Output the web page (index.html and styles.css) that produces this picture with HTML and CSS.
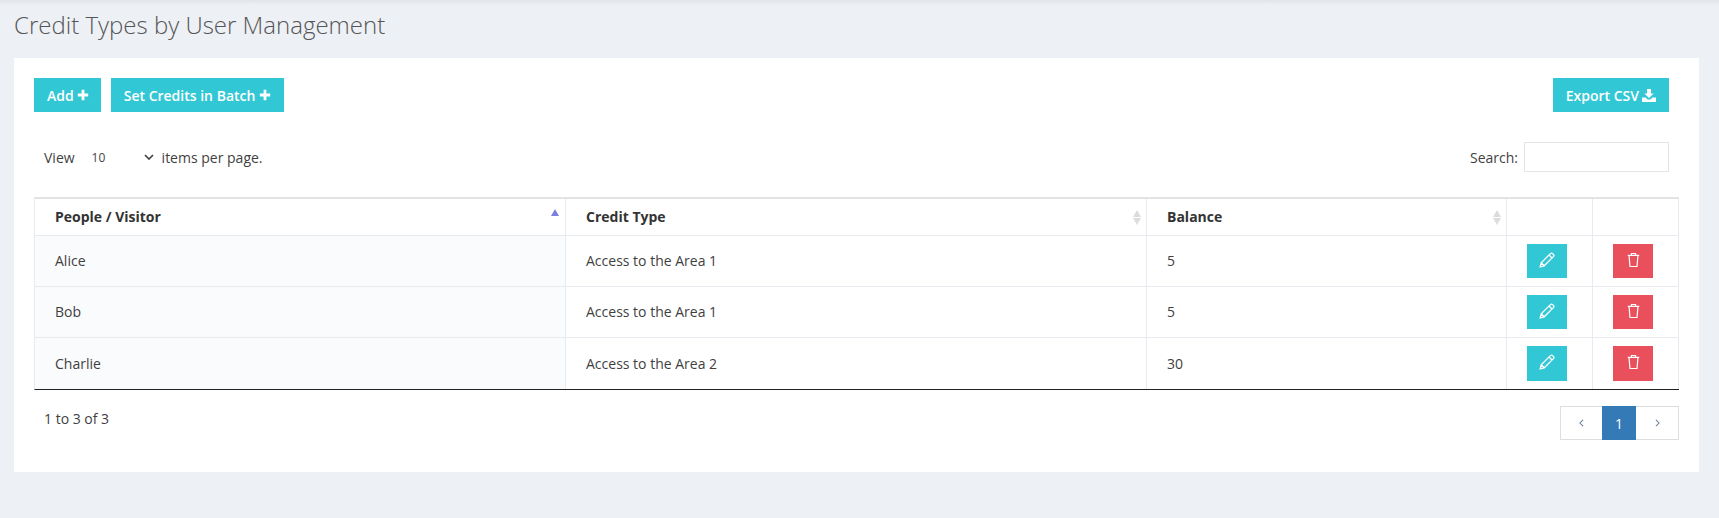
FILE: index.html
```html
<!DOCTYPE html>
<html lang="en">
<head>
<meta charset="utf-8">
<title>Credit Types by User Management</title>
<link rel="stylesheet" href="styles.css">
</head>
<body>
<div class="topshade"></div>
<h1 class="page-title">Credit Types by User Management</h1>
<main class="panel">
  <div class="toolbar">
    <div class="toolbar-left">
      <a class="btn btn-info">Add <svg class="ic" viewBox="0 0 12 12"><path d="M4.6 0.8h2.8v3.8h3.8v2.8H7.4v3.8H4.6V7.4H0.8V4.6h3.8z"/></svg></a>
      <a class="btn btn-info btn-wide">Set Credits in Batch <svg class="ic" viewBox="0 0 12 12"><path d="M4.6 0.8h2.8v3.8h3.8v2.8H7.4v3.8H4.6V7.4H0.8V4.6h3.8z"/></svg></a>
    </div>
    <a class="btn btn-info">Export CSV <svg class="ic ic-dl" viewBox="0 0 14 13"><path d="M5 0h4v4.5h2.6L7 9 2.4 4.5H5zM0 8.4h3.6L5.6 10.4h2.8l2-2H14V13H0z"/></svg></a>
  </div>
  <div class="controls">
    <label class="length">View
      <span class="select-wrap">
        <select class="select"><option>10</option><option>25</option><option>50</option></select>
        <svg class="chev" viewBox="0 0 10 6"><path d="M1 1l4 4 4-4" fill="none" stroke="#444" stroke-width="1.7"/></svg>
      </span>
      items per page.</label>
    <label class="search">Search: <input class="search-input" type="text"></label>
  </div>
  <table class="grid">
    <colgroup>
      <col class="c1"><col class="c2"><col class="c3"><col class="c4"><col class="c5">
    </colgroup>
    <thead>
      <tr>
        <th class="sortable"><span class="sort up-only"></span>People / Visitor</th>
        <th class="sortable"><span class="sort"></span>Credit Type</th>
        <th class="sortable"><span class="sort"></span>Balance</th>
        <th></th>
        <th></th>
      </tr>
    </thead>
    <tbody>
      <tr>
        <td class="first">Alice</td><td>Access to the Area 1</td><td>5</td>
        <td class="act"><a class="btn-sq btn-info"><svg class="pen" viewBox="0 0 16 16"><path d="M1.2 14.8l1-4L11.4 1.6a1.6 1.6 0 0 1 2.2 0l.8.8a1.6 1.6 0 0 1 0 2.2L5.2 13.8zM2.2 10.8l3 3M10 3l3 3" fill="none" stroke="#fff" stroke-width="1.3"/></svg></a></td>
        <td class="act"><a class="btn-sq btn-danger"><svg class="bin" viewBox="0 0 14 16"><path d="M0.8 3h12.4M2.2 3l1 12h7.6l1-12M4.8 3V1h4.4v2" fill="none" stroke="#fff" stroke-width="1.3"/></svg></a></td>
      </tr>
      <tr>
        <td class="first">Bob</td><td>Access to the Area 1</td><td>5</td>
        <td class="act"><a class="btn-sq btn-info"><svg class="pen" viewBox="0 0 16 16"><path d="M1.2 14.8l1-4L11.4 1.6a1.6 1.6 0 0 1 2.2 0l.8.8a1.6 1.6 0 0 1 0 2.2L5.2 13.8zM2.2 10.8l3 3M10 3l3 3" fill="none" stroke="#fff" stroke-width="1.3"/></svg></a></td>
        <td class="act"><a class="btn-sq btn-danger"><svg class="bin" viewBox="0 0 14 16"><path d="M0.8 3h12.4M2.2 3l1 12h7.6l1-12M4.8 3V1h4.4v2" fill="none" stroke="#fff" stroke-width="1.3"/></svg></a></td>
      </tr>
      <tr class="tall">
        <td class="first">Charlie</td><td>Access to the Area 2</td><td>30</td>
        <td class="act"><a class="btn-sq btn-info"><svg class="pen" viewBox="0 0 16 16"><path d="M1.2 14.8l1-4L11.4 1.6a1.6 1.6 0 0 1 2.2 0l.8.8a1.6 1.6 0 0 1 0 2.2L5.2 13.8zM2.2 10.8l3 3M10 3l3 3" fill="none" stroke="#fff" stroke-width="1.3"/></svg></a></td>
        <td class="act"><a class="btn-sq btn-danger"><svg class="bin" viewBox="0 0 14 16"><path d="M0.8 3h12.4M2.2 3l1 12h7.6l1-12M4.8 3V1h4.4v2" fill="none" stroke="#fff" stroke-width="1.3"/></svg></a></td>
      </tr>
    </tbody>
  </table>
  <div class="footer">
    <div class="info">1 to 3 of 3</div>
    <nav class="pager">
      <a class="page nav-page nav-prev"><svg class="arrow" viewBox="0 0 6 10"><path d="M5 1L1 5l4 4" fill="none" stroke="#6b7f95" stroke-width="1.3"/></svg></a>
      <a class="page current">1</a>
      <a class="page nav-page"><svg class="arrow" viewBox="0 0 6 10"><path d="M1 1l4 4-4 4" fill="none" stroke="#6b7f95" stroke-width="1.3"/></svg></a>
    </nav>
  </div>
</main>
</body>
</html>
```
FILE: styles.css
```css
* { box-sizing: border-box; }
html, body { margin: 0; padding: 0; }
body {
  width: 1719px;
  height: 518px;
  overflow: hidden;
  background: #edf0f5;
  font-family: "Open Sans", "Liberation Sans", sans-serif;
  font-size: 14px;
  color: #3f3f3f;
  position: relative;
}
.topshade {
  position: absolute;
  left: 0; right: 0; top: 0;
  height: 5px;
  background: linear-gradient(#e2e4e9, #edf0f5);
}
.page-title {
  margin: 0;
  padding: 8px 0 0 14px;
  height: 58px;
  font-size: 24px;
  line-height: 33px;
  font-weight: 300;
  color: #555;
}
.panel {
  margin: 0 20px 0 14px;
  height: 414px;
  background: #fff;
  padding: 20px;
}
.toolbar {
  display: flex;
  justify-content: space-between;
  padding-right: 10px;
}
.toolbar-left { display: flex; gap: 10px; }
.btn {
  display: flex;
  align-items: center;
  gap: 3px;
  height: 34px;
  padding: 0 12px 0 13px;
  color: #fff;
  font-weight: 600;
  font-size: 14px;
  white-space: nowrap;
}
.btn-wide { gap: 4px; padding-right: 13px; }
.btn-info { background: #32c7d4; }
.btn-danger { background: #ea4f5c; }
.ic { width: 12px; height: 12px; fill: #fff; }
.ic-dl { width: 14px; height: 13px; margin-right: 1px; }
.controls {
  display: flex;
  justify-content: space-between;
  align-items: center;
  height: 30px;
  margin-top: 30px;
  padding: 0 10px;
}
.length { display: flex; align-items: center; }
.select-wrap { position: relative; display: block; width: 66px; margin: 0 8px 0 13px; height: 30px; }
.select {
  appearance: none;
  width: 100%;
  height: 30px;
  border: 0;
  background: transparent;
  padding: 1px 0 0 4px;
  font: 12px "Open Sans", sans-serif;
  color: #444;
}
.chev { position: absolute; right: 0; top: 12px; width: 10px; height: 6px; }
.search { display: flex; align-items: center; gap: 6px; }
.search-input {
  width: 145px;
  height: 30px;
  border: 1px solid #e3e5e7;
  background: #fff;
  padding: 0 6px;
}
.grid {
  width: 1645px;
  margin-top: 25px;
  table-layout: fixed;
  border-collapse: separate;
  border-spacing: 0;
  border-top: 2px solid #e1e3e5;
  border-bottom: 1px solid #222;
  border-left: 1px solid #e7ebf0;
}
.c1 { width: 531px; }
.c2 { width: 581px; }
.c3 { width: 360px; }
.c4 { width: 86px; }
.c5 { width: 86px; }
th, td {
  border-right: 1px solid #e7ebf0;
  border-bottom: 1px solid #e7ebf0;
  padding: 0 20px;
  text-align: left;
  vertical-align: middle;
}
th {
  height: 37px;
  padding-bottom: 2px;
  font-weight: 700;
  color: #333;
  position: relative;
}
td { height: 51px; padding-bottom: 2px; }
tbody tr:last-child td { border-bottom: 0; height: 51px; padding-bottom: 0; }
.first { background: #fafbfd; }
.act, tbody tr:last-child td.act { padding: 0 0 0 20px; }
.btn-sq {
  display: flex;
  align-items: center;
  justify-content: center;
  width: 40px;
  height: 34px;
}
.tall .btn-sq { height: 35px; }
.pen { width: 16px; height: 16px; margin-top: -3px; }
.bin { width: 13px; height: 16px; margin-top: -3px; }
.sort {
  position: absolute;
  right: 4px;
  top: 10px;
  width: 10px;
  height: 16px;
}
.sort::before, .sort::after {
  content: "";
  position: absolute;
  left: 1px;
  border-left: 4px solid transparent;
  border-right: 4px solid transparent;
}
.sort::before { top: 1px; border-bottom: 7px solid #dcdcdc; }
.sort::after { top: 9px; border-top: 7px solid #dcdcdc; }
.up-only { right: 5px; }
.up-only::before { top: 0; border-bottom-color: #7d7fe0; }
.up-only::after { display: none; }
.footer {
  display: flex;
  justify-content: space-between;
  align-items: flex-start;
  margin-top: 16px;
}
.info { padding: 3px 0 0 10px; line-height: 20px; }
.pager {
  display: flex;
  width: 119px;
  height: 34px;
  border: 1px solid #dcdee0;
}
.page {
  display: flex;
  align-items: center;
  justify-content: center;
}
.nav-page { flex: 1; }
.nav-prev { flex: 0 0 41px; }
.current {
  width: 34px;
  margin: -1px 0;
  background: #337ab7;
  color: #fff;
  font-weight: 400;
  font-size: 14px;
}
.arrow { width: 5px; height: 8px; }
```
